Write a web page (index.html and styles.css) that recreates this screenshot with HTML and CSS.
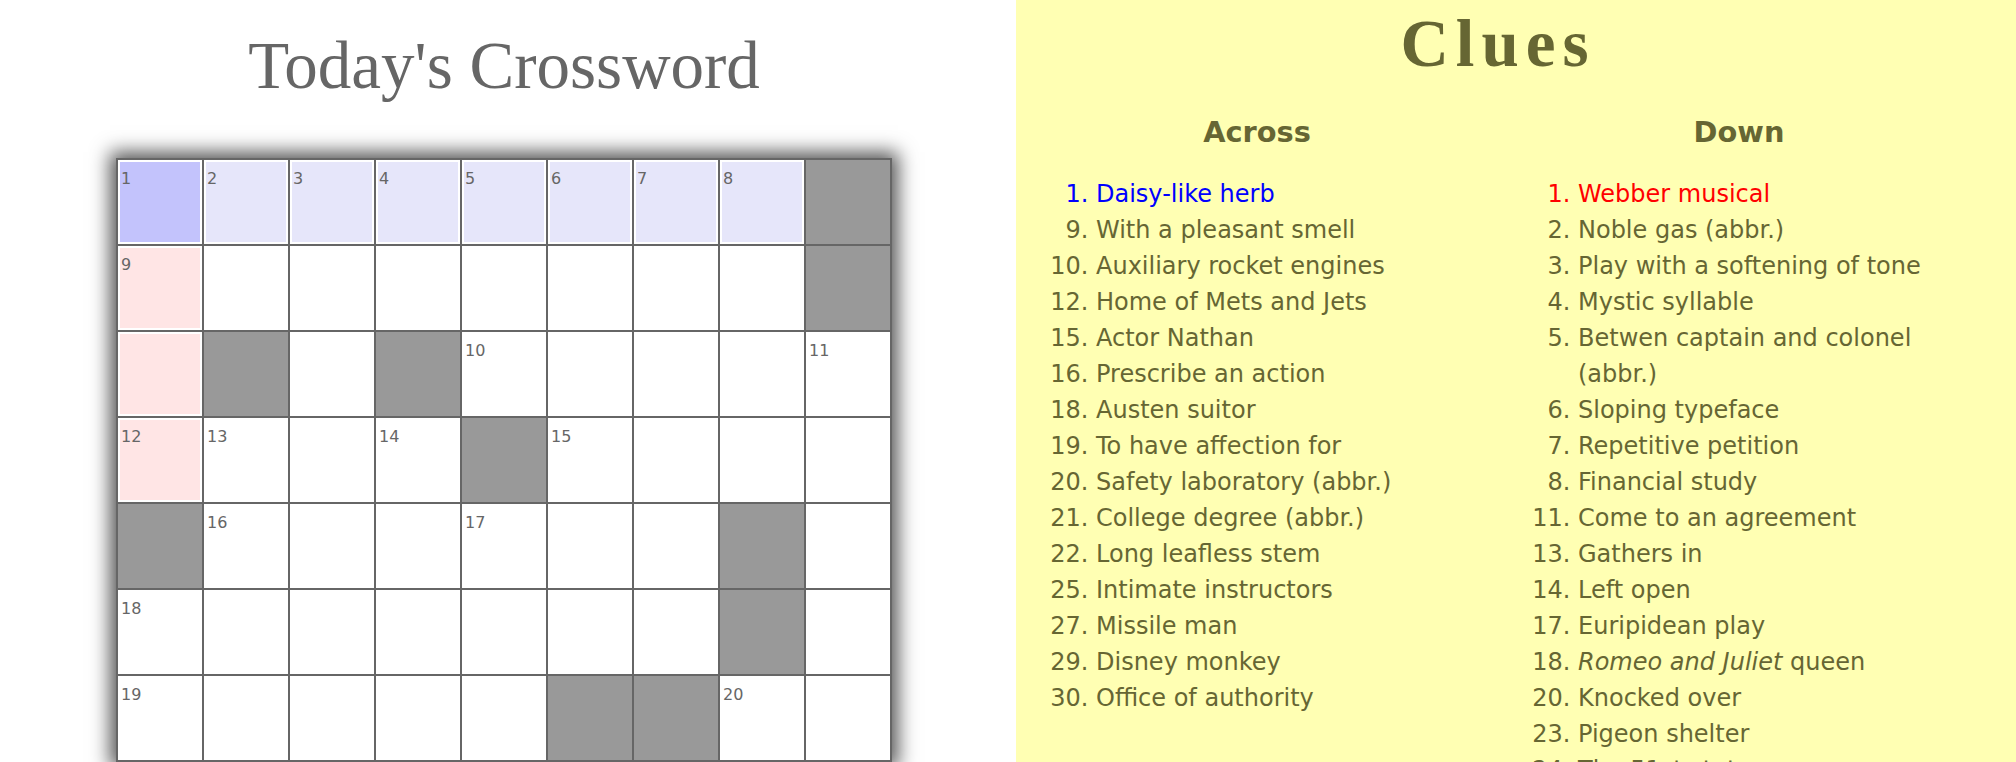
FILE: index.html
```html
<!DOCTYPE html>
<html lang="en">
<head>
<meta charset="utf-8">
<title>Today's Crossword</title>
<link rel="stylesheet" href="styles.css">
</head>
<body>
<div class="page">
  <section class="puzzle">
    <h1 class="title">Today's Crossword</h1>
    <div class="board">
      <div class="cell sel"><span class="num">1</span></div>
      <div class="cell ac"><span class="num">2</span></div>
      <div class="cell ac"><span class="num">3</span></div>
      <div class="cell ac"><span class="num">4</span></div>
      <div class="cell ac"><span class="num">5</span></div>
      <div class="cell ac"><span class="num">6</span></div>
      <div class="cell ac"><span class="num">7</span></div>
      <div class="cell ac"><span class="num">8</span></div>
      <div class="cell blk"></div>

      <div class="cell dn"><span class="num">9</span></div>
      <div class="cell"></div>
      <div class="cell"></div>
      <div class="cell"></div>
      <div class="cell"></div>
      <div class="cell"></div>
      <div class="cell"></div>
      <div class="cell"></div>
      <div class="cell blk"></div>

      <div class="cell dn"></div>
      <div class="cell blk"></div>
      <div class="cell"></div>
      <div class="cell blk"></div>
      <div class="cell"><span class="num">10</span></div>
      <div class="cell"></div>
      <div class="cell"></div>
      <div class="cell"></div>
      <div class="cell"><span class="num">11</span></div>

      <div class="cell dn"><span class="num">12</span></div>
      <div class="cell"><span class="num">13</span></div>
      <div class="cell"></div>
      <div class="cell"><span class="num">14</span></div>
      <div class="cell blk"></div>
      <div class="cell"><span class="num">15</span></div>
      <div class="cell"></div>
      <div class="cell"></div>
      <div class="cell"></div>

      <div class="cell blk"></div>
      <div class="cell"><span class="num">16</span></div>
      <div class="cell"></div>
      <div class="cell"></div>
      <div class="cell"><span class="num">17</span></div>
      <div class="cell"></div>
      <div class="cell"></div>
      <div class="cell blk"></div>
      <div class="cell"></div>

      <div class="cell"><span class="num">18</span></div>
      <div class="cell"></div>
      <div class="cell"></div>
      <div class="cell"></div>
      <div class="cell"></div>
      <div class="cell"></div>
      <div class="cell"></div>
      <div class="cell blk"></div>
      <div class="cell"></div>

      <div class="cell"><span class="num">19</span></div>
      <div class="cell"></div>
      <div class="cell"></div>
      <div class="cell"></div>
      <div class="cell"></div>
      <div class="cell blk"></div>
      <div class="cell blk"></div>
      <div class="cell"><span class="num">20</span></div>
      <div class="cell"></div>
    </div>
  </section>

  <section class="clues">
    <h2 class="clues-title">Clues</h2>
    <div class="clue-cols">
      <div class="clue-col">
        <h3 class="clue-head">Across</h3>
        <ol class="clue-list">
          <li value="1" class="hl-across">Daisy-like herb</li>
          <li value="9">With a pleasant smell</li>
          <li value="10">Auxiliary rocket engines</li>
          <li value="12">Home of Mets and Jets</li>
          <li value="15">Actor Nathan</li>
          <li value="16">Prescribe an action</li>
          <li value="18">Austen suitor</li>
          <li value="19">To have affection for</li>
          <li value="20">Safety laboratory (abbr.)</li>
          <li value="21">College degree (abbr.)</li>
          <li value="22">Long leafless stem</li>
          <li value="25">Intimate instructors</li>
          <li value="27">Missile man</li>
          <li value="29">Disney monkey</li>
          <li value="30">Office of authority</li>
        </ol>
      </div>
      <div class="clue-col">
        <h3 class="clue-head">Down</h3>
        <ol class="clue-list">
          <li value="1" class="hl-down">Webber musical</li>
          <li value="2">Noble gas (abbr.)</li>
          <li value="3">Play with a softening of tone</li>
          <li value="4">Mystic syllable</li>
          <li value="5">Betwen captain and colonel (abbr.)</li>
          <li value="6">Sloping typeface</li>
          <li value="7">Repetitive petition</li>
          <li value="8">Financial study</li>
          <li value="11">Come to an agreement</li>
          <li value="13">Gathers in</li>
          <li value="14">Left open</li>
          <li value="17">Euripidean play</li>
          <li value="18"><i>Romeo and Juliet</i> queen</li>
          <li value="20">Knocked over</li>
          <li value="23">Pigeon shelter</li>
          <li value="24">The 51st state</li>
        </ol>
      </div>
    </div>
  </section>
</div>
</body>
</html>
```

FILE: styles.css
```css
html, body {
  margin: 0;
  padding: 0;
  overflow: hidden;
  background: #fff;
}

body {
  font-family: "DejaVu Sans", Verdana, sans-serif;
  font-size: 24px;
}

.page {
  display: flex;
  align-items: stretch;
  min-height: 762px;
}

.puzzle {
  width: 1008px;
  margin-right: 8px;
  flex: none;
  text-align: center;
}

.title {
  margin: 25px 0 0;
  font-family: "Liberation Serif", "Times New Roman", serif;
  font-weight: normal;
  font-size: 67px;
  line-height: 80px;
  color: #666;
}

.board {
  display: grid;
  grid-template-columns: repeat(9, 84px);
  grid-auto-rows: 84px;
  gap: 2px;
  width: max-content;
  margin: 53px auto 0;
  padding: 2px;
  background: #666;
  box-shadow: 0 0 18px 6px #555;
  text-align: left;
}

.cell {
  box-sizing: border-box;
  background: #fff;
  border: 2px solid #fff;
  padding: 7px 1px;
  font-family: "DejaVu Sans", Verdana, sans-serif;
  font-size: 16px;
  color: #666;
}

.num {
  display: block;
}

.cell.blk {
  background: #999;
  border-color: #999;
}

.cell.sel {
  background: #c3c3fc;
}

.cell.ac {
  background: #e6e6fa;
}

.cell.dn {
  background: #ffe5e5;
}

.clues {
  width: 1000px;
  flex: none;
  box-sizing: border-box;
  padding: 10px 36px 0 0;
  background: #ffffb3;
  color: #666633;
}

.clues-title {
  margin: 0;
  text-align: center;
  font-family: "Liberation Serif", "Times New Roman", serif;
  font-weight: bold;
  font-size: 67px;
  line-height: 67px;
  letter-spacing: 7px;
  color: #666633;
}

.clue-cols {
  display: grid;
  grid-template-columns: 1fr 1fr;
  margin-top: 38px;
}

.clue-head {
  margin: 0 0 27px;
  text-align: center;
  font-size: 28.8px;
  line-height: 34px;
  font-weight: bold;
  color: #666633;
}

.clue-list {
  margin: 0;
  padding: 0 0 0 80px;
  line-height: 36px;
}

.hl-across {
  color: #0000ff;
}

.hl-down {
  color: #ff0000;
}
```
